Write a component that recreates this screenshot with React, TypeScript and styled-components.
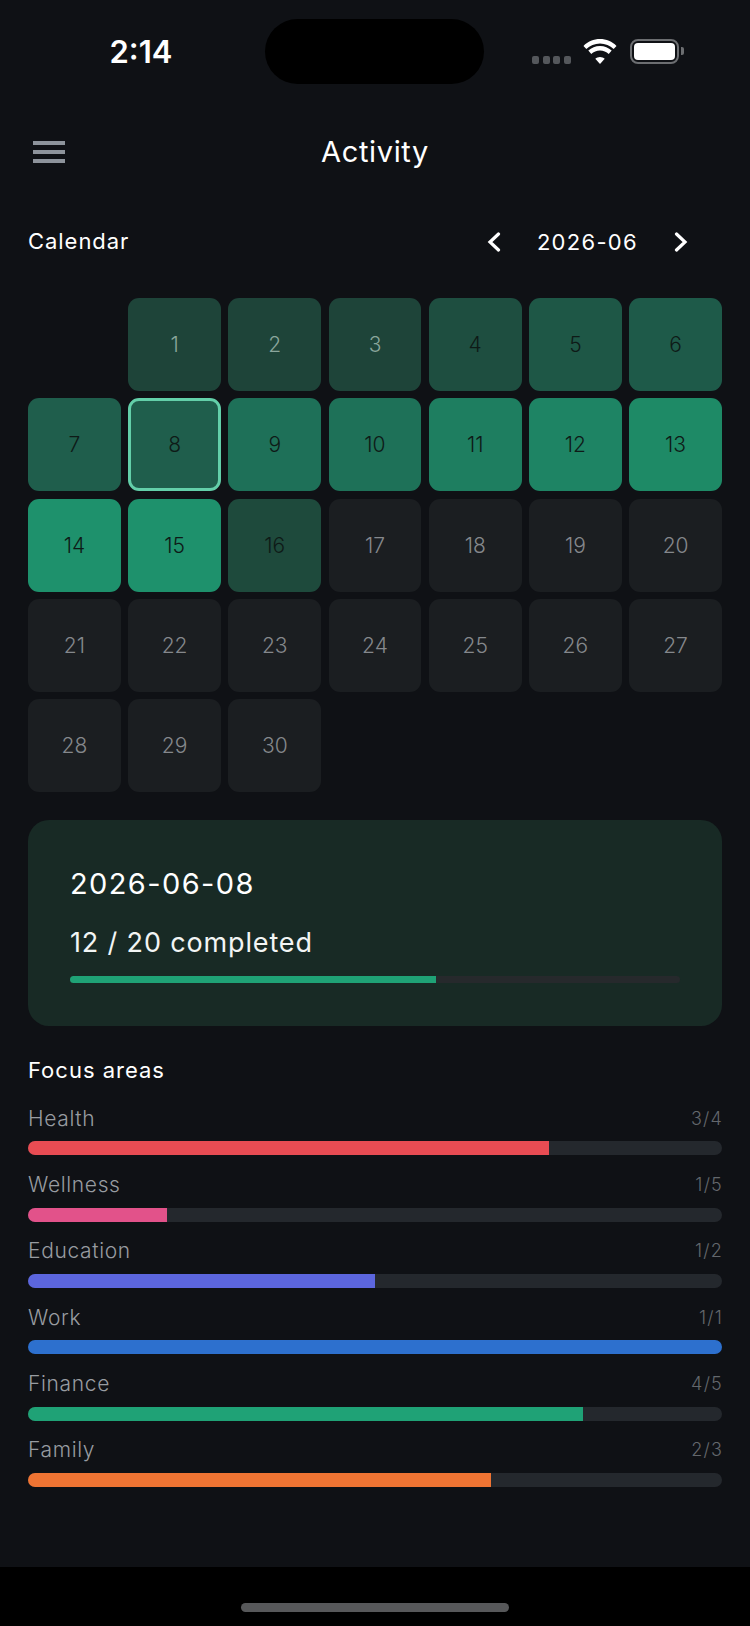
import React from 'react';
import styled, { createGlobalStyle } from 'styled-components';

const DAY_COLORS: Record<number, string> = {
  1: '#1e4439',
  2: '#1e4439',
  3: '#1e4439',
  4: '#1e4e40',
  5: '#1e5746',
  6: '#1e5a49',
  7: '#1f5e4c',
  8: '#1f5e4c',
  9: '#1e7058',
  10: '#1e7158',
  11: '#1e7e60',
  12: '#1e8464',
  13: '#1e8a66',
  14: '#1e916c',
  15: '#1e916c',
  16: '#1e4a3c',
};

const DAYS = Array.from({ length: 30 }, (_, i) => i + 1);

const AREAS = [
  { name: 'Health', done: 3, total: 4, color: '#e84c53' },
  { name: 'Wellness', done: 1, total: 5, color: '#e2528a' },
  { name: 'Education', done: 1, total: 2, color: '#5c66de' },
  { name: 'Work', done: 1, total: 1, color: '#2d70ce' },
  { name: 'Finance', done: 4, total: 5, color: '#1fa276' },
  { name: 'Family', done: 2, total: 3, color: '#ef7433' },
];

const dayInk = (day: number) => {
  if (day > 16) return '#85888c';
  if (day <= 3) return '#8aa69c';
  return '#0e1a17';
};

const App = () => {
  return (
    <>
      <GlobalStyle />
      <Screen>
        <StatusBar>
          <Time>2:14</Time>
          <Island />
          <StatusIcons>
            <Signal>
              <i />
              <i />
              <i />
              <i />
            </Signal>
            <svg width="34" height="25" viewBox="2.200 2.200 29.600 21.800">
              <path
                d="M17 6.200c4.600 0 8.800 1.800 11.900 4.800l2.500-2.800C27.600 4.500 22.500 2.200 17 2.200S6.400 4.500 2.600 8.200l2.500 2.800C8.200 8 12.400 6.200 17 6.200z"
                fill="#fff"
              />
              <path
                d="M17 12.200c2.900 0 5.600 1.100 7.600 3l2.600-2.900c-2.700-2.500-6.300-4.100-10.200-4.100S9.500 9.800 6.800 12.300l2.600 2.900c2-1.900 4.700-3 7.600-3z"
                fill="#fff"
              />
              <path d="M17 17.800c-1.600 0-3 .6-4.100 1.600L17 24l4.100-4.600c-1.100-1-2.500-1.600-4.100-1.600z" fill="#fff" />
            </svg>
            <Battery>
              <BatteryFill />
            </Battery>
          </StatusIcons>
        </StatusBar>

        <Header>
          <MenuButton>
            <i />
            <i />
            <i />
          </MenuButton>
          <Title>Activity</Title>
        </Header>

        <Main>
          <CalendarHeader>
            <SectionTitle>Calendar</SectionTitle>
            <MonthNav>
              <svg width="14" height="20" viewBox="0 0 14 20">
                <path d="M11.500 2 L3 10 L11.500 18" fill="none" stroke="#fff" strokeWidth="3.200" strokeLinecap="round" />
              </svg>
              <MonthLabel>2026-06</MonthLabel>
              <svg width="14" height="20" viewBox="0 0 14 20">
                <path d="M2.500 2 L11 10 L2.500 18" fill="none" stroke="#fff" strokeWidth="3.200" strokeLinecap="round" />
              </svg>
            </MonthNav>
          </CalendarHeader>

          <Grid>
            <div />
            {DAYS.map((day) => (
              <Day key={day} $bg={DAY_COLORS[day] ?? '#1b1e21'} $ink={dayInk(day)} $selected={day === 8}>
                {day}
              </Day>
            ))}
          </Grid>

          <SummaryCard>
            <SummaryDate>2026-06-08</SummaryDate>
            <SummaryCount>12 / 20 completed</SummaryCount>
            <SummaryTrack>
              <SummaryFill style={{ width: `${(12 / 20) * 100}%` }} />
            </SummaryTrack>
          </SummaryCard>

          <FocusTitle>Focus areas</FocusTitle>
          <AreaList>
            {AREAS.map((a) => (
              <Area key={a.name}>
                <AreaRow>
                  <AreaName>{a.name}</AreaName>
                  <AreaCount>
                    {a.done}/{a.total}
                  </AreaCount>
                </AreaRow>
                <AreaTrack>
                  <AreaFill $color={a.color} style={{ width: `${(a.done / a.total) * 100}%` }} />
                </AreaTrack>
              </Area>
            ))}
          </AreaList>
        </Main>

        <BottomBar>
          <HomeIndicator />
        </BottomBar>
      </Screen>
    </>
  );
};

const GlobalStyle = createGlobalStyle`
  html, body {
    margin: 0;
    padding: 0;
    background: #0f1115;
  }
  * {
    box-sizing: border-box;
  }
`;

const Screen = styled.div`
  width: 750px;
  height: 1626px;
  display: flex;
  flex-direction: column;
  background: #0f1115;
  color: #fff;
  font-family: Inter, 'Liberation Sans', sans-serif;
  overflow: hidden;
`;

const StatusBar = styled.div`
  display: grid;
  grid-template-columns: 265px 219px 1fr;
  height: 104px;
  padding-top: 19px;
`;

const Time = styled.div`
  height: 65px;
  line-height: 65px;
  text-align: center;
  padding-left: 17px;
  font-size: 31px;
  font-weight: 600;
`;

const Island = styled.div`
  height: 65px;
  background: #000;
  border-radius: 33px;
`;

const StatusIcons = styled.div`
  display: flex;
  align-items: center;
  height: 65px;
  padding-left: 48px;
  gap: 12px;
`;

const Signal = styled.div`
  display: flex;
  gap: 3.300px;
  margin-top: 17px;

  i {
    display: block;
    width: 7.300px;
    height: 8px;
    border-radius: 2px;
    background: #54575b;
  }
`;

const Battery = styled.div`
  position: relative;
  width: 49px;
  height: 25px;
  border: 2.500px solid #6c6e71;
  border-radius: 8px;
  padding: 2px;
  margin-left: 1px;

  &::after {
    content: '';
    position: absolute;
    right: -7px;
    top: 6px;
    width: 3px;
    height: 8px;
    border-radius: 0 2px 2px 0;
    background: #6c6e71;
  }
`;

const BatteryFill = styled.div`
  width: 100%;
  height: 100%;
  background: #fff;
  border-radius: 4px;
`;

const Header = styled.div`
  position: relative;
  display: flex;
  align-items: center;
  justify-content: center;
  height: 96px;
`;

const MenuButton = styled.div`
  position: absolute;
  left: 33px;
  top: 37px;
  display: flex;
  flex-direction: column;
  gap: 5px;

  i {
    display: block;
    width: 32px;
    height: 4px;
    background: #8d939b;
  }
`;

const Title = styled.div`
  font-size: 29px;
  letter-spacing: 0.650px;
  line-height: 40px;
`;

const Main = styled.div`
  flex: 1;
  display: flex;
  flex-direction: column;
  padding: 0 28px;
`;

const CalendarHeader = styled.div`
  display: flex;
  align-items: center;
  justify-content: space-between;
  height: 40px;
  margin-top: 21px;
`;

const SectionTitle = styled.div`
  font-size: 22px;
  letter-spacing: 0.950px;
`;

const MonthNav = styled.div`
  display: flex;
  align-items: center;
  gap: 36px;
  margin-top: 2px;
  margin-right: 34px;
`;

const MonthLabel = styled.div`
  font-size: 22px;
  letter-spacing: 1.300px;
`;

const Grid = styled.div`
  display: grid;
  grid-template-columns: repeat(7, 1fr);
  grid-auto-rows: 93px;
  gap: 7.330px;
  margin-top: 37px;
`;

const Day = styled.div<{ $bg: string; $ink: string; $selected?: boolean }>`
  display: flex;
  align-items: center;
  justify-content: center;
  border-radius: 11px;
  font-size: 21px;
  font-weight: 300;
  background: ${(p) => p.$bg};
  color: ${(p) => p.$ink};
  border: ${(p) => (p.$selected ? '3px solid #63cfa9' : 'none')};
`;

const SummaryCard = styled.div`
  display: flex;
  flex-direction: column;
  height: 206px;
  margin-top: 28px;
  padding: 42px 42px 0;
  background: #182a25;
  border-radius: 21px;
`;

const SummaryDate = styled.div`
  font-size: 29px;
  line-height: 40px;
  letter-spacing: 1.400px;
  margin-top: 2px;
`;

const SummaryCount = styled.div`
  font-size: 27px;
  line-height: 40px;
  letter-spacing: 0.850px;
  margin-top: 19px;
  color: #f2f5f4;
`;

const SummaryTrack = styled.div`
  height: 7px;
  margin-top: 13px;
  background: #26292c;
  border-radius: 4px;
  overflow: hidden;
`;

const SummaryFill = styled.div`
  height: 100%;
  background: #1fa276;
`;

const FocusTitle = styled.div`
  font-size: 22px;
  line-height: 30px;
  letter-spacing: 1px;
  margin-top: 29px;
`;

const AreaList = styled.div`
  display: flex;
  flex-direction: column;
  gap: 16.300px;
  margin-top: 20px;
`;

const Area = styled.div`
  display: flex;
  flex-direction: column;
  gap: 12px;
`;

const AreaRow = styled.div`
  display: flex;
  align-items: center;
  justify-content: space-between;
  height: 24px;
  padding-top: 2px;
`;

const AreaName = styled.div`
  font-size: 21px;
  font-weight: 300;
  letter-spacing: 0.650px;
  color: #989ca1;
`;

const AreaCount = styled.div`
  font-size: 18px;
  font-weight: 300;
  letter-spacing: 1.200px;
  margin-right: -1px;
  color: #63676c;
`;

const AreaTrack = styled.div`
  height: 14px;
  background: #24282d;
  border-radius: 7px;
  overflow: hidden;
`;

const AreaFill = styled.div<{ $color: string }>`
  height: 100%;
  background: ${(p) => p.$color};
`;

const BottomBar = styled.div`
  flex: none;
  display: flex;
  justify-content: center;
  height: 59px;
  padding-top: 36px;
  background: #000;
`;

const HomeIndicator = styled.div`
  width: 268px;
  height: 9px;
  border-radius: 5px;
  background: #57585a;
`;

export default App;
